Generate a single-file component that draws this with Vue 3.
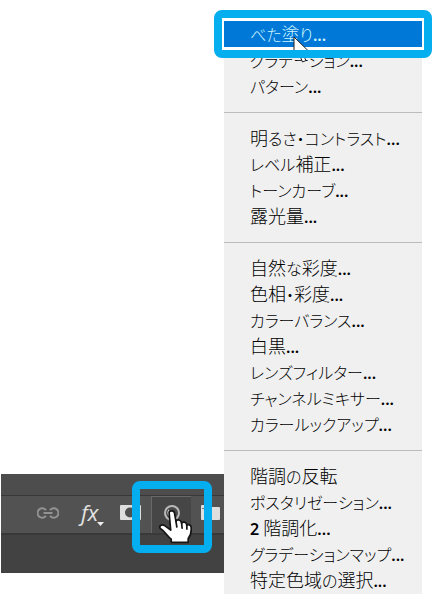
<script setup>
const labels = [
  ['べた塗り...', 'グラデーション...', 'パターン...'],
  ['明るさ・コントラスト...', 'レベル補正...', 'トーンカーブ...', '露光量...'],
  ['自然な彩度...', '色相・彩度...', 'カラーバランス...', '白黒...', 'レンズフィルター...', 'チャンネルミキサー...', 'カラールックアップ...'],
  ['階調の反転', 'ポスタリゼーション...', '2 階調化...', 'グラデーションマップ...', '特定色域の選択...'],
]
const selected = 'べた塗り...'

// Kana, kanji and Latin runs are set in their own sizes and weights.
const split = (text) =>
  text.match(/[\u3040-\u30ff]+|[\u0020-\u007e]+|[^\u0020-\u007e\u3040-\u30ff]+/g).map((run) => ({
    run,
    kind: /[\u3040-\u30ff]/.test(run) ? 'kana' : /[\u0020-\u007e]/.test(run) ? 'latin' : 'kanji',
  }))

const groups = labels.map((items) => items.map((text) => ({ text, runs: split(text) })))
</script>

<template>
  <main class="workspace">
    <section class="panel">
      <div class="toolbar">
        <button class="tool link" type="button" aria-label="レイヤーをリンク">
          <svg width="22" height="12" viewBox="0 0 22 12" fill="none" stroke="#929292" stroke-width="2">
            <path d="M9 3.2A4.7 4.7 0 1 0 9 8.8M13 3.2A4.7 4.7 0 1 1 13 8.8M6.5 6H15.5" />
          </svg>
        </button>
        <button class="tool fx" type="button" aria-label="レイヤースタイル">
          <span>fx</span>
          <svg width="7" height="4" viewBox="0 0 7 4"><path d="M0 0H7L3.5 4Z" fill="#eee" /></svg>
        </button>
        <button class="tool mask" type="button" aria-label="レイヤーマスク">
          <svg width="21" height="15" viewBox="0 0 21 15">
            <rect width="21" height="15" rx="1" fill="#dedede" />
            <circle cx="10" cy="7.5" r="5" fill="#505050" />
          </svg>
        </button>
        <button class="tool adjust" type="button" aria-label="調整レイヤー">
          <svg width="18" height="18" viewBox="0 0 18 18">
            <circle cx="9" cy="9" r="7" fill="#484848" stroke="#b9b9b9" stroke-width="2" />
            <path d="M5.5 5.5A5 5 0 0 0 12.5 12.5Z" fill="#cfcfcf" />
          </svg>
          <svg class="hand" width="36" height="36" viewBox="0 0 34 34">
            <path
              d="M10.5 3.5C10.5 1.2 15 1.2 15.5 3.5L17 12C17.5 9.5 21.5 10 22 12.5L22.3 13.5C23.5 11.4 26.6 12.4 27 14.5L27.2 15.5C28.6 14 31.3 15 31.3 17.5C31.7 22 31 25 28.5 28V31.5H12.5V28.5C8.5 25.5 7 21.5 2.2 18.5C.5 16.2 3.4 14 6 15.5L12 20Z"
              fill="#fff" stroke="#151515" stroke-width="1.6" stroke-linejoin="round"
            />
            <path d="M17 12L17.8 17M22.3 13.5L22.8 18M27.2 15.5L27.3 19" fill="none" stroke="#151515" stroke-width="1.6" stroke-linecap="round" />
          </svg>
        </button>
        <button class="tool folder" type="button" aria-label="新規グループ">
          <svg width="19" height="15" viewBox="0 0 19 15">
            <path d="M0 1Q0 0 1 0H7L9 2H18Q19 2 19 3V14Q19 15 18 15H1Q0 15 0 14Z" fill="#dedede" />
            <path d="M1 3.5H9" stroke="#777" stroke-width="1" />
          </svg>
        </button>
      </div>
    </section>

    <nav class="menu">
      <ul v-for="(items, g) in groups" :key="g" class="group">
        <li v-for="item in items" :key="item.text">
          <button class="item" :class="{ selected: item.text === selected }" type="button">
            <span v-for="(part, i) in item.runs" :key="i" :class="part.kind">{{ part.run }}</span>
            <svg v-if="item.text === selected" class="arrow" width="20" height="28" viewBox="0 0 20 28">
              <path d="M1 1V22L6 17.5L9.5 26L13 24.5L9.5 17.5H18Z" fill="#fff" stroke="#222" stroke-width="1" />
            </svg>
          </button>
        </li>
      </ul>
    </nav>
  </main>
</template>

<style>
body {
  background: #fff;
}
</style>

<style scoped>
.workspace {
  display: grid;
  grid-template-columns: minmax(0, 1fr) 198px;
  padding: 21px 10px 0 1px;
}

button {
  margin: 0;
  padding: 0;
  border: 0;
  background: none;
}

.panel {
  align-self: end;
  margin-bottom: 21px;
  padding: 21px 0 38px;
  background: linear-gradient(#4d4d4d 50%, #424242 50%);
}

.toolbar {
  display: flex;
  height: 40px;
  box-sizing: border-box;
  border-top: 1px solid #383838;
  border-bottom: 2px solid #393939;
  background: #525252;
}

.tool {
  display: flex;
  align-items: center;
  flex-shrink: 0;
}

.link {
  width: 80px;
  padding-left: 36px;
  padding-bottom: 4px;
}

.fx {
  width: 39px;
  color: #e2e2e2;
  font: italic 22px/32px "Open Sans", sans-serif;
  padding-bottom: 6px;
}

.fx svg {
  align-self: flex-end;
  margin-bottom: 1px;
  margin-left: -1px;
}

.mask {
  width: 31px;
  padding-bottom: 4px;
}

.adjust {
  position: relative;
  width: 40px;
  justify-content: center;
  padding-bottom: 4px;
  border-top: 1px solid #686868;
  border-left: 1px solid #686868;
  background: #464646;
}

.adjust::after {
  content: "";
  position: absolute;
  inset: -16px -21px -20px -20px;
  border: 8px solid #05aeef;
  border-radius: 8px;
}

.hand {
  position: absolute;
  z-index: 1;
  top: 12px;
  left: 6px;
}

.folder {
  width: 33px;
  padding-left: 10px;
  padding-bottom: 4px;
}

.menu {
  padding-bottom: 1px;
  background: #f0f0f0;
}

.group {
  margin: 0;
  padding: 0;
  list-style: none;
}

.group + .group {
  margin-top: 13px;
  padding-top: 12px;
  border-top: 1px solid #bcbcbc;
}

.item {
  position: relative;
  display: block;
  width: 100%;
  height: 26px;
  padding: 0 0 2px 26px;
  color: #000;
  font: 300 18px/24px "Noto Sans CJK JP", sans-serif;
  font-feature-settings: "palt";
  text-align: left;
  white-space: pre;
}

.kana {
  font-size: 16px;
}

.latin {
  font-family: "Noto Sans", sans-serif;
  font-size: 16px;
  font-weight: 600;
}

.selected {
  z-index: 1;
  background: #0078d7;
  box-shadow: 0 0 0 3px #fff;
  color: #cdf6ff;
}

.selected::after {
  content: "";
  position: absolute;
  inset: -11px -10px;
  border: 8px solid #05aeef;
  border-radius: 8px;
}

.arrow {
  position: absolute;
  top: 15px;
  left: 69px;
}
</style>
